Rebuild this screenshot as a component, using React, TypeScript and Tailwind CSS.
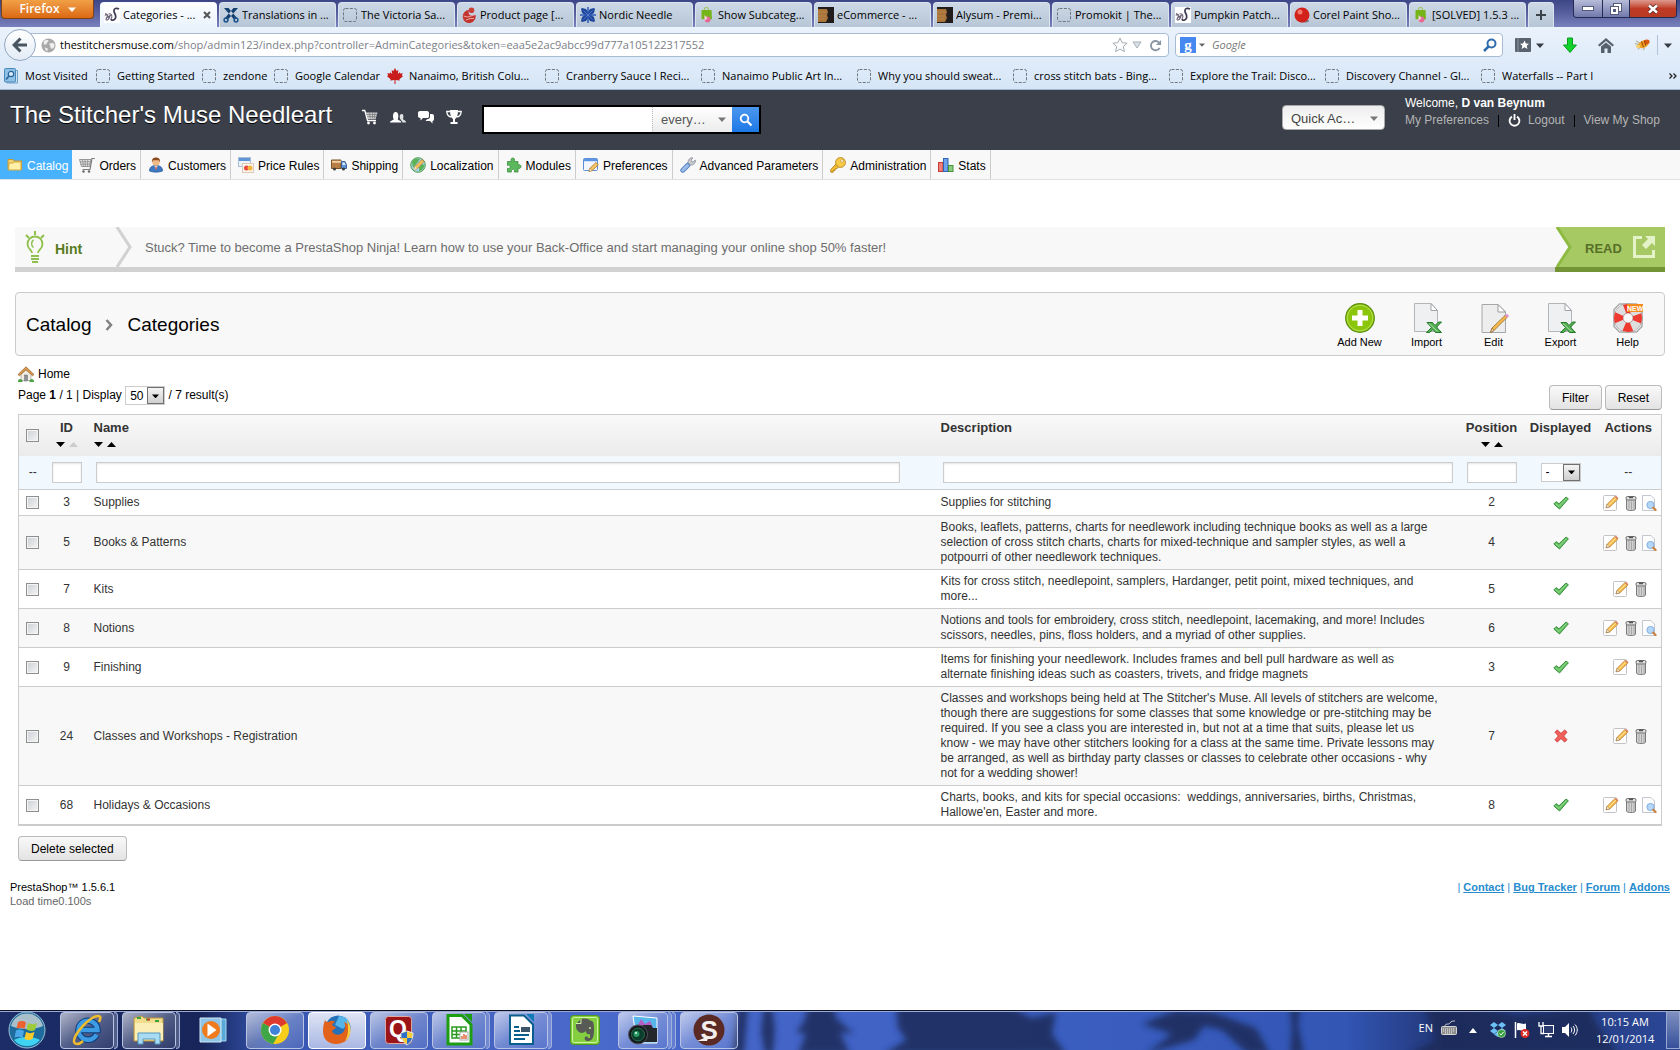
import React from "react";
import clsx from "clsx";

interface IconProps {
  className?: string;
}

type TabIconName = "muse" | "scissors" | "blank" | "presta" | "cross" | "bag" | "wood" | "red";

interface Category {
  id: number;
  name: string;
  description: string;
  position: number;
  displayed: boolean;
  viewable: boolean;
}

const tabs: { label: string; icon: TabIconName; active?: boolean }[] = [
  { label: "Categories - ...", icon: "muse", active: true },
  { label: "Translations in ...", icon: "scissors" },
  { label: "The Victoria Sa...", icon: "blank" },
  { label: "Product page [...", icon: "presta" },
  { label: "Nordic Needle", icon: "cross" },
  { label: "Show Subcateg...", icon: "bag" },
  { label: "eCommerce - ...", icon: "wood" },
  { label: "Alysum - Premi...", icon: "wood" },
  { label: "Promokit | The...", icon: "blank" },
  { label: "Pumpkin Patch...", icon: "muse" },
  { label: "Corel Paint Sho...", icon: "red" },
  { label: "[SOLVED] 1.5.3 ...", icon: "bag" },
];

const bookmarks = [
  { label: "Most Visited", icon: "visited", width: "w-[92px]" },
  { label: "Getting Started", icon: "blank", width: "w-[106px]" },
  { label: "zendone", icon: "blank", width: "w-[72px]" },
  { label: "Google Calendar", icon: "blank", width: "w-[114px]" },
  { label: "Nanaimo, British Colu...", icon: "maple", width: "w-[157px]" },
  { label: "Cranberry Sauce I Reci...", icon: "blank", width: "w-[156px]" },
  { label: "Nanaimo Public Art In...", icon: "blank", width: "w-[156px]" },
  { label: "Why you should sweat...", icon: "blank", width: "w-[156px]" },
  { label: "cross stitch bats - Bing...", icon: "blank", width: "w-[156px]" },
  { label: "Explore the Trail: Disco...", icon: "blank", width: "w-[156px]" },
  { label: "Discovery Channel - Gl...", icon: "blank", width: "w-[156px]" },
  { label: "Waterfalls -- Part I", icon: "blank", width: "w-[156px]" },
];

const categories: Category[] = [
  {
    id: 3,
    name: "Supplies",
    description: "Supplies for stitching",
    position: 2,
    displayed: true,
    viewable: true,
  },
  {
    id: 5,
    name: "Books & Patterns",
    description:
      "Books, leaflets, patterns, charts for needlework including technique books as well as a large selection of cross stitch charts, charts for mixed-technique and sampler styles, as well a potpourri of other needlework techniques.",
    position: 4,
    displayed: true,
    viewable: true,
  },
  {
    id: 7,
    name: "Kits",
    description:
      "Kits for cross stitch, needlepoint, samplers, Hardanger, petit point, mixed techniques, and more...",
    position: 5,
    displayed: true,
    viewable: false,
  },
  {
    id: 8,
    name: "Notions",
    description:
      "Notions and tools for embroidery, cross stitch, needlepoint, lacemaking, and more! Includes scissors, needles, pins, floss holders, and a myriad of other supplies.",
    position: 6,
    displayed: true,
    viewable: true,
  },
  {
    id: 9,
    name: "Finishing",
    description:
      "Items for finishing your needlework. Includes frames and bell pull hardware as well as alternate finishing ideas such as coasters, trivets, and fridge magnets",
    position: 3,
    displayed: true,
    viewable: false,
  },
  {
    id: 24,
    name: "Classes and Workshops - Registration",
    description:
      "Classes and workshops being held at The Stitcher's Muse. All levels of stitchers are welcome, though there are suggestions for some classes that some knowledge or pre-stitching may be required. If you see a class you are interested in, but not at a time that suits, please let us know - we may have other stitchers looking for a class at the same time. Private lessons may be arranged, as well as birthday party classes or classes to celebrate other occasions - why not for a wedding shower!",
    position: 7,
    displayed: false,
    viewable: false,
  },
  {
    id: 68,
    name: "Holidays & Occasions",
    description:
      "Charts, books, and kits for special occasions:\u00a0 weddings, anniversaries, births, Christmas, Hallowe'en, Easter and more.",
    position: 8,
    displayed: true,
    viewable: true,
  },
];

/* ---------- Browser icons ---------- */

const BlankIcon = () => (
  <svg viewBox="0 0 16 16" className="size-4 shrink-0">
    <rect x="1.5" y="1.5" width="13" height="13" rx="2" fill="none" stroke="#6f757c" strokeDasharray="3 1.4" />
  </svg>
);

const TabIcon = ({ name }: { name: TabIconName }) => {
  switch (name) {
    case "muse":
      return (
        <svg viewBox="0 0 16 16" className="size-4 shrink-0">
          <rect width="16" height="16" fill="#fff" />
          <path d="M15 2c-2.500-1.500-5.500-.5-5 2.500.3 2 2.500 3.500 1.500 6.500-.8 2.500-4 3-4.500 1" fill="none" stroke="#3d3a52" strokeWidth="1.700" />
          <path d="M.8 8.500c1.700-2 3.500-1 2.500 1s-2 3.500-.5 3.500 3-3 3.500-5M1.500 6l3.500 5.500M4.500 7c3-1 4.500 2 2.500 5M2 11l5-3" fill="none" stroke="#6e6478" strokeWidth="1.100" />
        </svg>
      );
    case "scissors":
      return (
        <svg viewBox="0 0 16 16" className="size-4 shrink-0">
          <path d="M1 1h4.500L14 11l-2.500 2zM15 1h-4.500L2 11l2.500 2z" fill="#14406f" />
          <circle cx="3" cy="13" r="1.900" fill="none" stroke="#1c548c" strokeWidth="1.500" />
          <circle cx="13" cy="13" r="1.900" fill="none" stroke="#1c548c" strokeWidth="1.500" />
        </svg>
      );
    case "presta":
      return (
        <svg viewBox="0 0 16 16" className="size-4 shrink-0">
          <path d="M8 3A6.500 6.500 0 1 0 14.500 8L9 8.500 7.500 6z" fill="#c4342f" />
          <circle cx="10.500" cy="3.200" r="2.800" fill="#c93f38" />
          <path d="M2.500 9l4 1 7-2M5 13l4-1.500h4" stroke="#e9a49c" fill="none" />
        </svg>
      );
    case "cross":
      return (
        <svg viewBox="0 0 16 16" className="size-4 shrink-0">
          <path d="M2 1l4 1 2 3 2-3 4-1 1 1-1 4-3 2 3 2 1 4-1 1-4-1-2-3-2 3-4 1-1-1 1-4 3-2-3-2-1-4z" fill="#1e479c" />
          <path d="M0 8h16M8 0v16" stroke="#2c59b6" strokeWidth="1.500" />
          <path d="M3.500 3.500l9 9M12.500 3.500l-9 9" stroke="#5f82cc" strokeWidth=".8" />
        </svg>
      );
    case "bag":
      return (
        <svg viewBox="0 0 16 16" className="size-4 shrink-0">
          <path d="M5.500 4V2a2 1.500 0 0 1 4 0v2" fill="none" stroke="#a4c56a" strokeWidth="1.200" />
          <path d="M2.500 3h10l.5 9-4 1-6.500-1z" fill="#76b51a" />
          <circle cx="8.500" cy="12.500" r="3" fill="#e56a97" />
          <path d="M5.500 8v6l3-3" fill="#f3d5dc" />
        </svg>
      );
    case "wood":
      return (
        <svg viewBox="0 0 16 16" className="size-4 shrink-0">
          <rect width="16" height="16" fill="#211d1c" />
          <path d="M0 2h9l1 3-1 3 1 3-2 4H0z" fill="#a8743a" />
          <path d="M0 5h8M0 9h8M0 12h7" stroke="#b88449" />
        </svg>
      );
    case "red":
      return (
        <svg viewBox="0 0 16 16" className="size-4 shrink-0">
          <ellipse cx="10" cy="14" rx="5" ry="1.500" fill="#77808c" />
          <circle cx="8" cy="8" r="7.500" fill="#d3211c" />
          <circle cx="6" cy="5" r="2.500" fill="#f37a6c" />
        </svg>
      );
    default:
      return <BlankIcon />;
  }
};

const BookmarkIcon = ({ name }: { name: string }) => {
  if (name === "visited") {
    return (
      <svg viewBox="0 0 16 16" className="size-4 shrink-0">
        <path d="M4 2.500h10.500v12.500H4z" fill="#cfe3f3" stroke="#6fa3c8" />
        <rect x="1.500" y=".5" width="11" height="13.500" rx="1" fill="#8fc1e6" stroke="#4a88b9" />
        <circle cx="8" cy="6" r="2.700" fill="#d8edfb" stroke="#2a6596" strokeWidth="1.200" />
        <path d="M6 8l-3 3.500" stroke="#2a6596" strokeWidth="1.500" />
      </svg>
    );
  }
  if (name === "maple") {
    return (
      <svg viewBox="0 0 16 16" className="size-4 shrink-0">
        <path d="M8 0l1.600 3 1.800-1-.6 4 2-1.800.4 1.300 2.500-.3-.8 2.300 1.100.8-3.600 2.900.4 1.400L8.500 12v4h-1v-4l-4.300.6.4-1.400L0 8.300l1.100-.8L.3 5.200l2.500.3.4-1.300 2 1.800-.6-4 1.800 1z" fill="#c81d1a" />
      </svg>
    );
  }
  return <BlankIcon />;
};

const Caret = ({ className }: IconProps) => (
  <svg viewBox="0 0 8 5" className={clsx("w-2 shrink-0", className)}>
    <path d="M0 .5h8L4 5z" fill="currentColor" />
  </svg>
);

/* ---------- Browser chrome ---------- */

const TabStrip = () => (
  <div className="flex h-[27px] items-start overflow-hidden bg-linear-to-b from-[#3d4686] via-[#59609f] to-[#7881bd]">
    <button className="ml-px flex h-[19px] w-[93px] shrink-0 items-center justify-center gap-2 rounded-b border border-t-0 border-[#7c4315] bg-linear-to-b from-[#f0a046] to-[#dc680f] text-[12px] font-semibold text-white">
      Firefox
      <Caret />
    </button>
    <div className="ml-[6px] flex items-end gap-[2px] pt-[2px]">
      {tabs.map((tab) => (
        <button
          key={tab.label}
          className={clsx(
            "flex h-[25px] w-[117px] items-center gap-[3px] overflow-hidden rounded-t-sm border border-b-0 pl-[3px] text-left whitespace-nowrap text-black",
            tab.active
              ? "border-[#f5faff] bg-linear-to-b from-[#fdfeff] to-[#e9f2fc]"
              : "border-[#dbe4ee] bg-linear-to-b from-[#ccd8e6] to-[#b7c6d6]"
          )}
        >
          <TabIcon name={tab.icon} />
          <span className="min-w-0 flex-1 overflow-hidden">{tab.label}</span>
          {tab.active && (
            <svg viewBox="0 0 8 8" className="mr-[5px] size-2 shrink-0">
              <path d="M1 1l6 6M7 1L1 7" stroke="#555" strokeWidth="2" />
            </svg>
          )}
        </button>
      ))}
      <button
        aria-label="New tab"
        className="flex h-[25px] w-[26px] items-center justify-center rounded-t-sm border border-b-0 border-[#dbe4ee] bg-linear-to-b from-[#ccd8e6] to-[#b7c6d6]"
      >
        <svg viewBox="0 0 10 10" className="size-[10px]">
          <path d="M5 0v10M0 5h10" stroke="#3c424a" strokeWidth="2" />
        </svg>
      </button>
    </div>
    <div className="mr-[3px] ml-auto flex h-[18px] shrink-0 overflow-hidden rounded-b border border-t-0 border-[#242a50]">
      <button aria-label="Minimize" className="flex w-[29px] items-center justify-center border-r border-[#242a50] bg-linear-to-b from-[#b7bcd9] to-[#7279ab]">
        <svg viewBox="0 0 12 5" className="w-3">
          <rect x=".5" y=".5" width="11" height="4" fill="#fff" stroke="#555b7e" />
        </svg>
      </button>
      <button aria-label="Restore" className="flex w-[27px] items-center justify-center border-r border-[#242a50] bg-linear-to-b from-[#b7bcd9] to-[#7279ab]">
        <svg viewBox="0 0 12 12" className="size-3">
          <rect x="3.500" y=".5" width="8" height="8" fill="#fff" stroke="#555b7e" />
          <rect x=".5" y="3.500" width="8" height="8" fill="#fff" stroke="#555b7e" />
          <rect x="3" y="6" width="3" height="3" fill="#555b7e" />
        </svg>
      </button>
      <button aria-label="Close" className="flex w-[46px] items-center justify-center bg-linear-to-b from-[#dc9a8f] via-[#c03a26] to-[#b83a20]">
        <svg viewBox="0 0 12 10" className="w-3">
          <path d="M2 1.500l8 7M10 1.500l-8 7" stroke="#5c2a2a" strokeWidth="4" />
          <path d="M2 1.500l8 7M10 1.500l-8 7" stroke="#fff" strokeWidth="2.500" />
        </svg>
      </button>
    </div>
  </div>
);

const NavBar = () => (
  <div className="flex h-9 items-center bg-linear-to-b from-[#eaf2fc] to-[#dfebf9] pr-2">
    <button
      aria-label="Back"
      className="z-10 ml-1 flex size-8 shrink-0 items-center justify-center rounded-full border border-[#93a8c2] bg-linear-to-b from-white to-[#e3ebf5]"
    >
      <svg viewBox="0 0 16 16" className="size-4">
        <path d="M8.500 1.500L2 8l6.500 6.500M2.500 8H15" fill="none" stroke="#4a5562" strokeWidth="3" />
      </svg>
    </button>
    <div className="-ml-2 flex h-6 flex-1 items-center rounded-r-sm border border-[#a7bcd4] bg-white pl-3">
      <svg viewBox="0 0 16 16" className="size-[15px] shrink-0">
        <circle cx="8" cy="8" r="7.500" fill="#a9a9a9" />
        <path d="M3 3c2-1 5-1 5 0s-2 2-2 3-1 1-3 1zM9 6c2-1 4-1 5 0s0 4-1 5-3 0-3-2-2-2-1-3zM4 10l3 1 0 3-2-1z" fill="#efefef" />
      </svg>
      <div className="ml-1 flex-1 text-[#7b8087]">
        <span className="text-black">thestitchersmuse.com</span>
        /shop/admin123/index.php?controller=AdminCategories&amp;token=eaa5e2ac9abcc99d777a105122317552
      </div>
      <svg viewBox="0 0 16 16" className="size-4">
        <path d="M8 1l2.100 4.700 5 .5-3.800 3.400 1.100 5L8 12l-4.400 2.600 1.100-5L.9 6.200l5-.5z" fill="#fdfdfd" stroke="#a5adb6" />
      </svg>
      <svg viewBox="0 0 10 8" className="ml-1 w-[10px]">
        <path d="M1 1h8L5 7z" fill="#dbe1e8" stroke="#a5adb6" />
      </svg>
      <svg viewBox="0 0 14 14" className="mr-[6px] ml-[7px] size-[13px]">
        <path d="M11.500 9.500A5 5 0 1 1 10.500 3.500" fill="none" stroke="#8795a5" strokeWidth="2" />
        <path d="M13 1v5.500H7.500z" fill="#8795a5" />
      </svg>
    </div>
    <div className="ml-[6px] flex h-6 w-[328px] items-center rounded-sm border border-[#a7bcd4] bg-white pr-[5px] pl-1">
      <span className="flex size-4 items-center justify-center bg-[#4687f0] font-['Liberation_Serif',serif] text-[15px] leading-[14px] font-bold text-white">
        g
      </span>
      <Caret className="ml-[3px] w-[6px] text-[#666]" />
      <input
        aria-label="Search Google"
        placeholder="Google"
        className="ml-[7px] min-w-0 flex-1 italic outline-none placeholder:text-[#777]"
      />
      <svg viewBox="0 0 14 14" className="size-[14px]">
        <circle cx="8.500" cy="5.500" r="4" fill="none" stroke="#2f6cab" strokeWidth="2" />
        <path d="M5.500 8.500L1 13" stroke="#2f6cab" strokeWidth="2.500" />
      </svg>
    </div>
    <button aria-label="Bookmarks" className="ml-3 flex items-center gap-[5px] text-[#333b45]">
      <svg viewBox="0 0 16 14" className="w-4">
        <rect width="16" height="14" rx="1" fill="#59636f" />
        <path d="M3 0v14" stroke="#8c96a3" />
        <path d="M9.500 2.500l1.400 3 3.100.3-2.300 2 .7 3.200-2.900-1.700L6.600 11l.7-3.200L5 5.800l3.100-.3z" fill="#fff" />
      </svg>
      <Caret />
    </button>
    <button aria-label="Downloads" className="ml-[18px]">
      <svg viewBox="0 0 16 16" className="size-4">
        <path d="M5.500 1h5v7h4L8 15.500 1.500 8h4z" fill="#12d22e" stroke="#0a9c1f" />
      </svg>
    </button>
    <button aria-label="Home page" className="ml-[20px]">
      <svg viewBox="0 0 16 16" className="size-4">
        <path d="M0 8l8-7 8 7-1.500 1.500L8 4 1.500 9.500z" fill="#56616e" />
        <path d="M3 9.500l5-4 5 4V16H9.500v-4.500h-3V16H3z" fill="#56616e" />
      </svg>
    </button>
    <button aria-label="Firebug" className="ml-[20px]">
      <svg viewBox="0 0 18 14" className="w-[17px]">
        <path d="M1 6l5 1M4 12l4-3M10 13l1-3M2 3l5 3" stroke="#9aa07d" />
        <ellipse cx="10" cy="6.500" rx="6" ry="3.800" transform="rotate(-25 10 6.500)" fill="#f0a021" />
        <ellipse cx="13.500" cy="4" rx="3" ry="2.500" fill="#d8590f" />
        <path d="M8 3.500l2 6M11 3l1.500 5" stroke="#8f3c0b" />
        <ellipse cx="4.500" cy="9" rx="2.500" ry="1.500" fill="#f7cf6a" />
      </svg>
    </button>
    <span className="mx-[6px] h-5 border-l border-[#b3c3d6]" />
    <Caret className="text-[#333b45]" />
  </div>
);

const BookmarksBar = () => (
  <div className="flex h-[27px] items-center border-b border-[#a4b9d1] bg-linear-to-b from-[#dfebf9] to-[#d6e6f6] pl-[3px] text-black">
    {bookmarks.map((item) => (
      <a key={item.label} href="#" className={clsx("flex items-center gap-[6px] whitespace-nowrap", item.width)}>
        <BookmarkIcon name={item.icon} />
        {item.label}
      </a>
    ))}
    <button aria-label="More bookmarks" className="mr-[3px] ml-auto">
      <svg viewBox="0 0 8 6" className="w-2">
        <path d="M.5.500L3 3 .5 5.500M4.500.500L7 3 4.500 5.500" fill="none" stroke="#222" strokeWidth="1.300" />
      </svg>
    </button>
  </div>
);

/* ---------- Shop icons ---------- */

const CartIcon = ({ className }: IconProps) => (
  <svg viewBox="0 0 16 16" className={clsx("size-4 shrink-0", className)}>
    <path d="M0 1.500h2.800L5.500 11.500H14" fill="none" stroke="currentColor" strokeWidth="1.300" />
    <path d="M3.500 3.500H15.500L13.500 10H5.500z" fill="currentColor" opacity=".75" />
    <path d="M4 5.500h11M5 7.700h9.500M7.500 3.500l.8 6M10.500 3.500v6M13 3.500l-.8 6" stroke="#6a6a6a" strokeWidth=".6" />
    <circle cx="6.500" cy="14" r="1.400" fill="currentColor" />
    <circle cx="12.500" cy="14" r="1.400" fill="currentColor" />
  </svg>
);

/* Cart used in the main menu, with its basket on the left */
const OrdersIcon = () => (
  <svg viewBox="0 0 16 16" className="size-4 shrink-0">
    <path d="M.5 2.500h11.500L10.500 9.500H2.500z" fill="#e3e3e3" stroke="#8d8d8d" strokeWidth=".9" />
    <path d="M1 4.800h10.500M1.800 7.200H11M3.500 2.500l1 7M6 2.500l.3 7M8.800 2.500l-.4 7" stroke="#8d8d8d" strokeWidth=".8" />
    <path d="M15.800 1.500H13L11 12.500H3.500" fill="none" stroke="#7b7b7b" strokeWidth="1.200" />
    <circle cx="4.500" cy="14.500" r="1.200" fill="#666" />
    <circle cx="10" cy="14.500" r="1.200" fill="#666" />
  </svg>
);

const FolderIcon = () => (
  <svg viewBox="0 0 16 16" className="size-4 shrink-0">
    <path d="M1 2.500h5l1 1.500h7.500V12.500H1z" fill="#f2d172" stroke="#c99a2c" />
    <path d="M2 6h4l1-1h7v8H1.500z" fill="#fff0a8" stroke="#d5a93a" />
  </svg>
);

const PersonIcon = () => (
  <svg viewBox="0 0 16 16" className="size-4 shrink-0">
    <path d="M1.500 14c0-4 2.500-5.500 6.500-5.500s6.500 1.500 6.500 5.500c-3 1.500-10 1.500-13 0z" fill="#3d78c3" stroke="#255391" strokeWidth=".7" />
    <path d="M6.500 9l1.500 4 1.500-4z" fill="#fff" />
    <path d="M7.500 9.500h1L8.700 12l-.7 1-.7-1z" fill="#c43a22" />
    <circle cx="8" cy="5" r="3.700" fill="#f0b987" />
    <path d="M4 5.500C3.300 1.500 6 .5 8 .5s4.700 1 4 5l-1-2.300H5z" fill="#8a4a1b" />
  </svg>
);

const PriceIcon = () => (
  <svg viewBox="0 0 16 16" className="size-4 shrink-0">
    <rect x=".5" y=".5" width="12" height="9" fill="#edf3fa" stroke="#a9bdd5" />
    <rect x="1" y="1" width="11" height="3" fill="#5d95d6" />
    <rect x="4.500" y="6.500" width="11" height="9" fill="#fbf6ee" stroke="#dccab6" />
    <circle cx="8.500" cy="11" r="2.500" fill="#e8463c" />
    <circle cx="12" cy="11" r="2.500" fill="#f5b43c" />
  </svg>
);

const TruckIcon = () => (
  <svg viewBox="0 0 16 16" className="size-4 shrink-0">
    <path d="M.5 3h9.500v8.500H.5z" fill="#b87f45" stroke="#7d5226" />
    <path d="M1 4.800h9" stroke="#f0cfa3" strokeWidth="2" />
    <path d="M10.500 4.500h3.500l1.500 3.500v3.500h-5z" fill="#5f94d6" stroke="#38609a" />
    <path d="M11.500 5.500h2l1 2.500h-3z" fill="#d9ecfb" />
    <circle cx="3.500" cy="12" r="1.500" fill="#3c3c3c" />
    <circle cx="12.500" cy="12" r="1.500" fill="#3c3c3c" />
  </svg>
);

const GlobeIcon = () => (
  <svg viewBox="0 0 16 16" className="size-4 shrink-0">
    <circle cx="8" cy="8" r="7.300" fill="#a5d5ea" stroke="#4f9c4a" />
    <path d="M2 5c2-4 6-4 8-3L7 6l-4 5zM9 14c3 0 5-3 5.500-6L12 7l-3 3z" fill="#5db255" />
    <path d="M4 13l1-3.500L12 2.500l2 2L7 11.800z" fill="#f5c25c" stroke="#b1742a" strokeWidth=".7" />
    <path d="M4 13l1-3.500L7 11.800z" fill="#fbe9c5" />
  </svg>
);

const PuzzleIcon = () => (
  <svg viewBox="0 0 16 16" className="size-4 shrink-0">
    <path d="M1.500 4.500h4C4.500 2.500 5.200 1 6.800 1s2.300 1.500 1.300 3.500H12v3.700c1.800-1 3-.2 3 1.300s-1.200 2.500-3 1.500V15H8.300c.8-1.800 0-2.700-1.300-2.700s-2.300.9-1.500 2.700h-4v-3.800c1.700.8 2.700 0 2.700-1.400s-1-2.100-2.700-1.300z" fill="#5cb85c" stroke="#3b8f3e" strokeWidth=".8" />
  </svg>
);

const PreferencesIcon = () => (
  <svg viewBox="0 0 16 16" className="size-4 shrink-0">
    <rect x=".5" y="1.500" width="14" height="12" rx="1" fill="#f3f7fd" stroke="#5c8fd3" />
    <path d="M1 3h13" stroke="#5c95e3" strokeWidth="2.500" />
    <path d="M6 14.500l1-3.300 6-5.700 2.300 2.300-6 5.700z" fill="#f6c463" stroke="#a9762b" strokeWidth=".8" />
    <path d="M6 14.500l1-3.300 2.300 2.300z" fill="#fdf0d4" stroke="#a9762b" strokeWidth=".5" />
  </svg>
);

const WrenchIcon = () => (
  <svg viewBox="0 0 16 16" className="size-4 shrink-0">
    <path d="M2.800 13.200l5-5" stroke="#5a86c4" strokeWidth="5" strokeLinecap="round" />
    <path d="M2.800 13.200l4.700-4.700" stroke="#9dbdea" strokeWidth="3" strokeLinecap="round" />
    <path d="M8 5.500C8 2 11 0 13 1l-2 2 .5 1.500 1.500.5 2.300-2C16 6 13 8.500 10.500 8z" fill="#c9cdd2" stroke="#868b92" strokeWidth=".8" />
  </svg>
);

const KeyIcon = () => (
  <svg viewBox="0 0 16 16" className="size-4 shrink-0">
    <path d="M6.500 6.500L.8 12.500v2.700h2.400V13.500h1.800v-1.700h1.800L9 9.500z" fill="#f2be32" stroke="#b3801a" strokeWidth=".9" />
    <circle cx="10.500" cy="5.500" r="4.900" fill="#f7cb46" stroke="#b9861e" strokeWidth=".9" />
    <circle cx="12" cy="4" r="1.400" fill="#fff" stroke="#b9861e" strokeWidth=".6" />
  </svg>
);

const StatsIcon = () => (
  <svg viewBox="0 0 16 16" className="size-4 shrink-0">
    <rect x=".5" y="5.500" width="4.500" height="9" fill="#f07f7a" stroke="#c83a35" />
    <rect x="5.500" y="1.500" width="4.500" height="13" fill="#6fa3ea" stroke="#2f64b5" />
    <rect x="10.500" y="8.500" width="4.500" height="6" fill="#8cce81" stroke="#46903b" />
  </svg>
);

const HouseIcon = () => (
  <svg viewBox="0 0 16 16" className="size-4 shrink-0">
    <path d="M3 8l5-5 5 5v6.500H3z" fill="#efece4" stroke="#9a958b" strokeWidth=".6" />
    <path d="M0 8.500L8 .8l8 7.700-1.500 1.200L8 3.900 1.500 9.700z" fill="#d99a4e" stroke="#93602a" strokeWidth=".7" />
    <rect x="6.500" y="9" width="3" height="6" fill="#8f9297" stroke="#66696e" strokeWidth=".5" />
    <path d="M0 15c0-2 3-3 4-1 1 .5 1 2 0 2H0zM16 15c0-2-3-3-4-1-1 .5-1 2 0 2h4z" fill="#4fa347" />
  </svg>
);

const EditSmallIcon = () => (
  <svg viewBox="0 0 16 16" className="size-4 shrink-0">
    <rect x=".5" y=".5" width="13" height="15" rx="1" fill="#fff" stroke="#c3c3c8" />
    <path d="M3 12.800l1.200-3.600 7.500-7.400 2.800 2.600-7.600 7.400z" fill="#f9c04f" stroke="#b77a2c" strokeWidth=".8" />
    <path d="M3 12.800l1.200-3.600 2.700 2.600z" fill="#f7e7cf" stroke="#8d6c46" strokeWidth=".5" />
    <path d="M5.500 10.300l7.300-7.200" stroke="#fde6a4" />
    <path d="M11.700 1.800l2.800 2.600 1-1.200L13 .8z" fill="#d9866a" />
  </svg>
);

const TrashIcon = () => (
  <svg viewBox="0 0 12 16" className="h-4 w-3 shrink-0">
    <path d="M1.500 4.500h9v9.500c0 2-9 2-9 0z" fill="#d2d2d2" stroke="#7a7a7a" />
    <path d="M4 6v8M6.500 6.300v8.200M9 6v8" stroke="#9a9a9a" strokeWidth=".8" />
    <rect x="1" y="1.500" width="10" height="3.500" rx="1.500" fill="#dedede" stroke="#6a6a6a" />
    <path d="M4 2.500h4" stroke="#555" strokeWidth="1.500" />
  </svg>
);

const ViewIcon = () => (
  <svg viewBox="0 0 16 16" className="size-4 shrink-0">
    <path d="M1.500.5H10l3.500 3.500v11.500h-12z" fill="#fdfdfe" stroke="#c4c7cd" />
    <circle cx="9.500" cy="10" r="3.600" fill="#b5d7f7" stroke="#80afe0" />
    <path d="M12.300 12.800l2.200 2.200" stroke="#c98240" strokeWidth="2.300" strokeLinecap="round" />
  </svg>
);

const CheckIcon = () => (
  <svg viewBox="0 0 16 16" className="size-4">
    <path d="M.8 9l2.400-2.400 2.800 2.200L13 2l2.400 1.800L6.500 14z" fill="#5fc05c" stroke="#33873a" strokeWidth=".9" />
    <path d="M2.500 8.700l3.500 2.800 7.500-8" fill="none" stroke="#9ddd97" strokeWidth=".9" />
  </svg>
);

const CrossIcon = () => (
  <svg viewBox="0 0 16 16" className="size-4">
    <path d="M2 4.300L4.300 2 8 5.500 11.700 2 14 4.300 10.600 8l3.400 3.700-2.300 2.300L8 10.500 4.300 14 2 11.700 5.400 8z" fill="#f2605c" stroke="#c92f2f" strokeWidth=".9" />
  </svg>
);

const menuItems = [
  { label: "Catalog", icon: <FolderIcon />, active: true },
  { label: "Orders", icon: <OrdersIcon /> },
  { label: "Customers", icon: <PersonIcon /> },
  { label: "Price Rules", icon: <PriceIcon /> },
  { label: "Shipping", icon: <TruckIcon /> },
  { label: "Localization", icon: <GlobeIcon /> },
  { label: "Modules", icon: <PuzzleIcon /> },
  { label: "Preferences", icon: <PreferencesIcon /> },
  { label: "Advanced Parameters", icon: <WrenchIcon /> },
  { label: "Administration", icon: <KeyIcon /> },
  { label: "Stats", icon: <StatsIcon /> },
];

/* ---------- Shop header ---------- */

const Header = () => (
  <header className="flex h-[60px] items-start bg-[#3a3f49] text-white">
    <h1 className="mt-[10px] ml-[10px] text-[24px] leading-[30px] [text-shadow:0_1px_0_#000]">
      The Stitcher's Muse Needleart
    </h1>
    <div className="mt-[19px] ml-[30px] flex gap-3">
      <button aria-label="New orders">
        <CartIcon />
      </button>
      <button aria-label="New customers">
        <svg viewBox="0 0 16 16" className="size-4">
          <path d="M0 13.500c0-2 3-2 3.700-3.300C2.500 8 2.700 3 5.700 3s3.200 5 2 7.200c.7 1.300 3.700 1.300 3.700 3.300z" fill="#fff" />
          <path d="M10 9.500C9.300 7 10 5 11.700 5s2.300 2.300 1.200 5c.6 1 3.100 1.200 3.100 3.500h-3.500c-.3-1.800-2-2.300-2.500-4z" fill="#dfe0e2" />
        </svg>
      </button>
      <button aria-label="New messages">
        <svg viewBox="0 0 16 16" className="size-4">
          <path d="M2 2h7c1.500 0 2 1 2 2v3c0 1.500-.7 2-2 2H5l-2.500 2.500V9C.7 9 0 8 0 7V4c0-1 .5-2 2-2z" fill="#fff" />
          <path d="M12 5h2c1.500 0 2 1 2 2v3c0 1.300-.7 2-1.500 2v2.500L12 12H7.500L9 10.200c2 0 3-1 3-2.700z" fill="#fff" />
        </svg>
      </button>
      <button aria-label="Milestones">
        <svg viewBox="0 0 16 16" className="size-4">
          <path d="M4 1h8c0 5-1 8-3 9v3h2.500v2h-7v-2H7v-3C5 9 4 6 4 1z" fill="#fff" />
          <path d="M4 2.500H.8C1 6 2.500 7.500 5 8M12 2.500h3.200C15 6 13.500 7.500 11 8" fill="none" stroke="#fff" strokeWidth="1.300" />
        </svg>
      </button>
    </div>
    <form className="mt-[15px] ml-[20px] flex h-[29px] w-[279px] border-2 border-black bg-white" onSubmit={(e) => e.preventDefault()}>
      <input aria-label="Search" className="min-w-0 flex-1 px-2 text-[13px] text-black outline-none" />
      <div className="relative w-20 border-l border-dotted border-[#bbb] bg-linear-to-b from-white to-[#ececec]">
        <select aria-label="Search scope" className="h-full w-full appearance-none pl-2 text-[13px] text-[#555] outline-none">
          <option>every…</option>
        </select>
        <Caret className="pointer-events-none absolute top-[10px] right-[6px] text-[#777]" />
      </div>
      <button aria-label="Go" className="flex w-[27px] items-center justify-center bg-linear-to-b from-[#4b97ee] to-[#1a78e6]">
        <svg viewBox="0 0 14 14" className="size-[14px]">
          <circle cx="5.500" cy="5.500" r="3.800" fill="none" stroke="#fff" strokeWidth="1.800" />
          <path d="M8.500 8.500l4 4" stroke="#fff" strokeWidth="2.200" />
        </svg>
      </button>
    </form>
    <div className="relative mt-[15px] ml-auto h-[25px] w-[103px] rounded border border-[#aaa] bg-linear-to-b from-[#eee] to-white">
      <select aria-label="Quick Access" className="h-full w-full appearance-none pl-2 text-[13px] text-[#444] outline-none">
        <option>Quick Ac…</option>
      </select>
      <Caret className="pointer-events-none absolute top-[10px] right-[6px] text-[#777]" />
    </div>
    <div className="mt-[5px] mr-[20px] ml-[20px] w-[255px] text-[12px] leading-[17px]">
      <p>
        Welcome, <strong>D van Beynum</strong>
      </p>
      <div className="flex items-center justify-between text-[#b4b4b4]">
        <a href="#">My Preferences</a>
        <span className="h-3 border-l border-black" />
        <a href="#" className="flex items-center gap-[7px]">
          <svg viewBox="0 0 14 14" className="size-[13px]">
            <path d="M4.300 2.800a5.300 5.300 0 1 0 5.400 0" fill="none" stroke="#fff" strokeWidth="2" />
            <path d="M7 0v6.500" stroke="#fff" strokeWidth="2" />
          </svg>
          Logout
        </a>
        <span className="h-3 border-l border-black" />
        <a href="#">View My Shop</a>
      </div>
    </div>
  </header>
);

const MainMenu = () => (
  <nav className="flex h-[30px] border-b border-[#e0e0e0] bg-[#f8f8f8] text-[12px] text-black">
    {menuItems.map((item) => (
      <a
        key={item.label}
        href="#"
        className={clsx(
          "flex items-center gap-1 pr-[4px] pl-[7px] whitespace-nowrap",
          item.active ? "bg-[#49b2ff] text-white" : "border-r border-[#ccc]"
        )}
      >
        {item.icon}
        <span className="pt-[2px]">{item.label}</span>
      </a>
    ))}
  </nav>
);

/* ---------- Page body ---------- */

const HintBar = () => (
  <div className="mt-[47px] flex h-[45px]">
    <div className="flex flex-1 items-stretch border-b-[5px] border-[#d1d1d1] bg-[#f8f8f8]">
      <div className="flex w-[101px] items-center gap-[10px] pl-[10px]">
        <svg viewBox="0 0 20 32" className="h-8 w-5" fill="none" stroke="#8fc04b">
          <path d="M10 0v4M1 4l3 3M19 4l-3 3" strokeWidth="2" />
          <path d="M7 22c0-3-4.500-4-4.500-9a7.500 7.500 0 0 1 15 0c0 5-4.500 6-4.500 9" strokeWidth="1.800" />
          <path d="M6 25h8M6 28h8M7 31h6" strokeWidth="2" />
          <path d="M8.500 9c-2.500 1.500-2.500 6 0 7.500" strokeWidth="1.500" />
        </svg>
        <span className="pt-1 text-[14px] font-bold text-[#587c1e]">Hint</span>
      </div>
      <svg viewBox="0 0 16 40" className="h-10 w-4">
        <path d="M1 0l13 20L1 40" fill="none" stroke="#d1d1d1" strokeWidth="3" />
      </svg>
      <p className="ml-[13px] self-center pt-px text-[13px] text-[#6d6d6d]">
        Stuck? Time to become a PrestaShop Ninja! Learn how to use your Back-Office and start managing your online shop 50% faster!
      </p>
    </div>
    <a href="#" className="flex w-[110px] items-center border-b-[5px] border-[#739334] bg-[#a6c964] text-[13px] font-bold text-[#576f27]">
      <svg viewBox="0 0 18 40" className="h-10 w-[18px]">
        <path d="M0 0h2l13 20L2 40H0z" fill="#f8f8f8" />
        <path d="M2 0l13 20L2 40" fill="none" stroke="#8dbb42" strokeWidth="3" />
      </svg>
      <span className="ml-[12px] flex-1 pt-1">READ</span>
      <svg viewBox="0 0 22 22" className="mr-[10px] size-[22px]">
        <path d="M9 1.500H1.500v19h19V14" fill="none" stroke="#e4f2c8" strokeWidth="3" />
        <path d="M12 0h10v10l-3-3-6 6-4-4 6-6z" fill="#e4f2c8" />
      </svg>
    </a>
  </div>
);

const SheetIcon = () => (
  <svg viewBox="0 0 30 30" className="size-[30px]">
    <path d="M2.500.5H19l6.500 7v21h-23z" fill="#eef0f1" stroke="#b3b6b9" />
    <path d="M19 .5v7h6.500z" fill="#fff" stroke="#a0a4a8" />
    <path d="M15 19.500h5.500l2.500 3 3.500-3.500h3l-5 5.200 5 5.300h-6l-2.500-3-3.500 3h-3l5-5z" fill="#54b053" stroke="#23792b" />
    <path d="M17 20.500l8.500 8" stroke="#c5eabf" strokeWidth=".8" />
  </svg>
);

const toolbar = [
  {
    label: "Add New",
    icon: (
      <svg viewBox="0 0 30 30" className="size-[30px]">
        <circle cx="15" cy="15" r="14.300" fill="#8cc60c" stroke="#5a8f12" strokeWidth="1.200" />
        <circle cx="15" cy="15" r="12.800" fill="none" stroke="#b9e04f" />
        <path d="M12.500 7h5v5.500H23v5h-5.500V23h-5v-5.500H7v-5h5.500z" fill="#fff" />
      </svg>
    ),
  },
  { label: "Import", icon: <SheetIcon /> },
  {
    label: "Edit",
    icon: (
      <svg viewBox="0 0 30 30" className="size-[30px]">
        <path d="M3 1.500h16l7.500 7.500v20.500H3z" fill="#ededed" stroke="#a5a8ab" />
        <path d="M19 1.500V9h7.500z" fill="#fff" stroke="#999" />
        <path d="M11.500 29.500l1.500-4.500L26 12.500l2 2L15 27.500z" fill="#f5b94a" stroke="#96662a" strokeWidth=".8" />
        <path d="M11.500 29.500l1.500-4.500 2 2.500z" fill="#e9d3b2" stroke="#96662a" strokeWidth=".6" />
        <path d="M26 12.500l1-1c2-.7 3.300.8 2.500 2.300L28 14.500z" fill="#e892cf" />
      </svg>
    ),
  },
  { label: "Export", icon: <SheetIcon /> },
  {
    label: "Help",
    icon: (
      <svg viewBox="0 0 30 30" className="size-[30px]">
        <path d="M6.500 1h17L29 6.500v17L23.500 29h-17L1 23.500v-17z" fill="none" stroke="#a9a9a9" strokeWidth="1.500" />
        <circle cx="15" cy="15" r="9.500" fill="none" stroke="#9a9a9a" strokeWidth="10" />
        <circle cx="15" cy="15" r="9.500" fill="none" stroke="#dedede" strokeWidth="9" />
        <circle cx="15" cy="15" r="9.500" fill="none" stroke="#ef3a2f" strokeWidth="9" strokeDasharray="7.460 7.460" strokeDashoffset="3.730" />
        <circle cx="15" cy="15" r="5" fill="#f8f8f8" stroke="#9e4a44" strokeWidth=".5" />
        <rect x="14" y="1" width="16" height="8" fill="#f58a1f" />
        <text x="14" y="7.500" fontSize="7" fontWeight="bold" fontFamily="Liberation Sans" fill="#fff">
          NEW
        </text>
      </svg>
    ),
  },
];

const PageTitle = () => (
  <div className="mt-5 flex h-16 items-center rounded border border-[#ccc] bg-[#f8f8f8] pt-[2px] pl-[10px] text-[19px] text-black">
    <span>Catalog</span>
    <svg viewBox="0 0 8 12" className="mr-[15px] ml-[13px] h-3 w-2">
      <path d="M1.500 1L6 6l-4.500 5" fill="none" stroke="#808080" strokeWidth="2.500" />
    </svg>
    <h2>Categories</h2>
    <div className="mr-[3px] ml-auto flex pt-[2px]">
      {toolbar.map((item) => (
        <a key={item.label} href="#" className="flex w-[67px] flex-col items-center text-[11px] leading-[15px]">
          {item.icon}
          <span className="mt-[2px]">{item.label}</span>
        </a>
      ))}
    </div>
  </div>
);

interface BoxSelectProps {
  label: string;
  value: string;
}

const BoxSelect: React.FC<BoxSelectProps> = ({ label, value }) => (
  <span className="relative inline-block h-[19px] w-10 border border-[#ccc] bg-white align-middle">
    <select aria-label={label} className="block h-full w-full appearance-none pl-1 text-[12px] leading-[16px] text-black outline-none">
      <option>{value}</option>
    </select>
    <span className="pointer-events-none absolute inset-y-0 right-0 flex w-[17px] items-center justify-center border border-[#707070] bg-linear-to-b from-[#f4f4f4] to-[#cfcfcf]">
      <Caret className="w-[7px] text-black" />
    </span>
  </span>
);

const buttonClass =
  "h-[25px] rounded-sm border border-[#bbb] border-b-[#999] bg-linear-to-b from-[#f9f9f9] to-[#e3e3e3] px-3 text-[12px] text-black";

const checkboxClass =
  "block mx-auto size-[13px] appearance-none border border-[#8e8f8f] bg-linear-to-br from-[#cbcfd5] to-[#f6f6f6] shadow-[inset_0_0_0_1px_#f4f4f4]";

const inputClass =
  "block h-[21px] border border-[#ccc] bg-white px-1 text-[12px] shadow-[inset_0_1px_2px_#e4e4e4] outline-none";

const SortArrows = ({ ascDisabled = false }: { ascDisabled?: boolean }) => (
  <span className="mt-[7px] flex gap-1">
    <button aria-label="Sort descending">
      <svg viewBox="0 0 9 5" className="w-[9px]">
        <path d="M0 0h9L4.500 5z" fill="#000" />
      </svg>
    </button>
    <button aria-label="Sort ascending">
      <svg viewBox="0 0 9 5" className="w-[9px]">
        <path d="M0 5h9L4.500 0z" fill={ascDisabled ? "#ccc" : "#000"} />
      </svg>
    </button>
  </span>
);

const CategoryTable = () => (
  <table className="w-full table-fixed border-collapse border border-b-2 border-[#ccc] text-[12px] leading-[15px] text-[#333]">
    <colgroup>
      <col className="w-7" />
      <col className="w-10" />
      <col />
      <col className="w-[524px]" />
      <col className="w-[68px]" />
      <col className="w-[70px]" />
      <col className="w-[66px]" />
    </colgroup>
    <thead>
      <tr className="h-[41px] bg-linear-to-b from-[#f9f9f9] to-[#ebebeb] text-[13px]">
        <th>
          <input type="checkbox" aria-label="Select all" className={checkboxClass} />
        </th>
        <th className="pt-[5px] align-top">
          ID
          <span className="flex justify-center">
            <SortArrows ascDisabled />
          </span>
        </th>
        <th className="pt-[5px] pl-[7px] text-left align-top">
          Name
          <SortArrows />
        </th>
        <th className="pt-[5px] pl-[7px] text-left align-top">Description</th>
        <th className="pt-[5px] align-top">
          Position
          <span className="flex justify-center">
            <SortArrows />
          </span>
        </th>
        <th className="pt-[5px] align-top">Displayed</th>
        <th className="pt-[5px] align-top">Actions</th>
      </tr>
      <tr className="h-[34px] border-b border-[#ccc] bg-[#f1f8fe]">
        <td className="text-center">--</td>
        <td>
          <input aria-label="Filter by ID" className={clsx(inputClass, "mx-auto w-[30px]")} />
        </td>
        <td className="pl-[9px]">
          <input aria-label="Filter by name" className={clsx(inputClass, "w-[96%]")} />
        </td>
        <td className="pr-[5px] pl-[9px]">
          <input aria-label="Filter by description" className={clsx(inputClass, "w-full")} />
        </td>
        <td>
          <input aria-label="Filter by position" className={clsx(inputClass, "mx-auto w-[50px]")} />
        </td>
        <td className="text-center">
          <BoxSelect label="Filter by displayed" value="-" />
        </td>
        <td className="text-center">--</td>
      </tr>
    </thead>
    <tbody>
      {categories.map((category, index) => (
        <tr key={category.id} className={clsx("border-b border-[#ccc]", index % 2 === 1 && "bg-[#f8f8f8]")}>
          <td className="py-1">
            <input type="checkbox" aria-label={`Select ${category.name}`} className={checkboxClass} />
          </td>
          <td className="py-1 text-center">{category.id}</td>
          <td className="py-1 pl-[7px]">{category.name}</td>
          <td className="py-1 pr-[17px] pl-[7px]">{category.description}</td>
          <td className="py-1 text-center">{category.position}</td>
          <td className="py-1">
            <button aria-label={category.displayed ? "Enabled" : "Disabled"} className="mx-auto block">
              {category.displayed ? <CheckIcon /> : <CrossIcon />}
            </button>
          </td>
          <td className="py-1">
            <div className="flex h-[17px] items-center justify-center gap-1 pl-[3px]">
              <button aria-label="Edit">
                <EditSmallIcon />
              </button>
              <button aria-label="Delete" className="pl-[2px]">
                <TrashIcon />
              </button>
              {category.viewable && (
                <button aria-label="View">
                  <ViewIcon />
                </button>
              )}
            </div>
          </td>
        </tr>
      ))}
    </tbody>
  </table>
);

const Content = () => (
  <main className="px-[15px] text-black">
    <HintBar />
    <PageTitle />
    <div className="px-[3px]">
      <a href="#" className="mt-[10px] flex items-center gap-1 text-[12px] leading-[16px]">
        <HouseIcon />
        Home
      </a>
      <div className="mt-[3px] mb-1 flex h-[25px] items-start justify-between text-[12px]">
        <div className="pt-px leading-[19px]">
          Page <b>1</b> / 1 | Display <BoxSelect label="Results per page" value="50" /> / 7 result(s)
        </div>
        <div className="flex gap-[3px]">
          <button className={buttonClass}>Filter</button>
          <button className={buttonClass}>Reset</button>
        </div>
      </div>
      <CategoryTable />
      <button className={clsx(buttonClass, "mt-[10px]")}>Delete selected</button>
    </div>
  </main>
);

const Footer = () => (
  <footer className="mt-[19px] flex justify-between px-[10px] text-[11px] leading-[14px]">
    <div>
      <a href="#" className="block text-black">
        PrestaShop™ 1.5.6.1
      </a>
      <span className="text-[#666]">Load time0.100s</span>
    </div>
    <div className="text-[#268ccd]">
      {["Contact", "Bug Tracker", "Forum", "Addons"].map((label) => (
        <React.Fragment key={label}>
          {" | "}
          <a href="#" className="font-bold underline">
            {label}
          </a>
        </React.Fragment>
      ))}
    </div>
  </footer>
);

/* ---------- Taskbar ---------- */

interface TaskItem {
  label: string;
  stacked?: number;
  state: "open" | "active" | "idle";
  icon: React.ReactNode;
}

const taskItems: TaskItem[] = [
  {
    label: "Internet Explorer",
    stacked: 1,
    state: "open",
    icon: (
      <svg viewBox="0 0 32 32" className="size-8">
        <path d="M25.500 20.500A9.500 9.500 0 1 1 26.500 16H9" fill="none" stroke="#0d3c79" strokeWidth="6.500" />
        <path d="M25.500 20.500A9.500 9.500 0 1 1 26.500 16H9" fill="none" stroke="#3c9be2" strokeWidth="4.500" />
        <path d="M28 8c2-4 2-6-1-6C21 2 9 13 4 23c-2 5-1 7 2 7 2 0 4-1 6-3" fill="none" stroke="#f0bb2c" strokeWidth="2.500" />
      </svg>
    ),
  },
  {
    label: "Windows Explorer",
    stacked: 1,
    state: "open",
    icon: (
      <svg viewBox="0 0 32 32" className="size-8">
        <path d="M1 4l8-2 2 2h19v23H1z" fill="#f3dd8d" stroke="#b8963c" />
        <path d="M2 9h28v17H2z" fill="#fbeeb6" />
        <path d="M4 4h4M13 5.500h4M22 7h4" stroke="#3aa53e" strokeWidth="2" />
        <path d="M14 5.500h3" stroke="#d33d2b" strokeWidth="2" />
        <path d="M5 30V19h22v11h-5v-5H10v5z" fill="#a9dbf2" stroke="#5697bd" />
      </svg>
    ),
  },
  {
    label: "Media Player",
    state: "idle",
    icon: (
      <svg viewBox="0 0 32 32" className="size-8">
        <path d="M8 5h21v22H8z" fill="#5aa8d8" stroke="#a5d6f0" />
        <path d="M3 4h21v24H3z" fill="#8fc5e6" stroke="#d1ebf8" />
        <circle cx="14" cy="16" r="9" fill="#f07b1c" />
        <path d="M10.500 9.500v13l9-6.500z" fill="#fff" />
      </svg>
    ),
  },
  {
    label: "Chrome",
    state: "open",
    icon: (
      <svg viewBox="0 0 32 32" className="size-8">
        <circle cx="16" cy="16" r="14" fill="#f7cd1c" />
        <path d="M16 16L3.900 9A14 14 0 0 1 28.100 9z" fill="#de3a2d" />
        <path d="M16 16L3.900 9A14 14 0 0 0 14 29.900L20 20z" fill="#3fa648" />
        <circle cx="16" cy="16" r="6.500" fill="#fff" />
        <circle cx="16" cy="16" r="5" fill="#3f83d9" />
      </svg>
    ),
  },
  {
    label: "Firefox",
    state: "active",
    icon: (
      <svg viewBox="0 0 32 32" className="size-8">
        <circle cx="17" cy="14" r="12.500" fill="#2471b9" />
        <path d="M18 2c6 0 9 4 10 6l-6 7-8-4z" fill="#55b4e8" />
        <path d="M4 6c1 2 2 2 4 2 3-2 5-1 6 0-3 1-3 3-2 4l3 1c-1 3-4 3-4 4 2 5 9 5 12 0 2-3 1-7 0-9 5 2 6 6 6 10 0 7-6 12-14 12S2 25 2 17c0-5 1-8 2-11z" fill="#e2621c" />
        <path d="M26 6c5 6 5 16-2 21 3-5 4-11 2-21z" fill="#f8cf3c" />
      </svg>
    ),
  },
  {
    label: "QuickBooks",
    state: "open",
    icon: (
      <svg viewBox="0 0 32 32" className="size-8">
        <rect x="2.500" y="2.500" width="26" height="27" rx="3" fill="#9b1418" stroke="#e0a6a0" />
        <text x="6" y="23" fontSize="23" fontWeight="bold" fontFamily="Liberation Sans" fill="#fff">
          Q
        </text>
        <path d="M24 17l6 2c0 6-2 9-6 12-4-3-6-6-6-12z" fill="#f6cd38" stroke="#dde6f0" />
        <path d="M24 17.500V24h-5.500l-.2-4.500zM24 24h5c-.7 3-2.500 5-5 6.500z" fill="#2d6fc9" />
      </svg>
    ),
  },
  {
    label: "Calc",
    stacked: 1,
    state: "open",
    icon: (
      <svg viewBox="0 0 32 32" className="size-8">
        <path d="M5 1.500h14l9 9V30H5z" fill="#fff" stroke="#1d9d12" strokeWidth="3" />
        <path d="M21 0h8v8z" fill="#1d9d12" />
        <path d="M9 13h14v11H9zM9 17h14M9 20.500h14M13.500 13v11M18 13v11" fill="none" stroke="#2a9a1f" strokeWidth="1.500" />
        <rect x="17" y="18" width="8" height="8" fill="#fff" stroke="#aaa" />
        <path d="M19 25v-3M21 25v-5M23 25v-4" stroke="#e0562a" strokeWidth="1.300" />
      </svg>
    ),
  },
  {
    label: "Writer",
    stacked: 1,
    state: "open",
    icon: (
      <svg viewBox="0 0 32 32" className="size-8">
        <path d="M5 1.500h14l9 9V30H5z" fill="#fff" stroke="#0a5e8e" strokeWidth="2" />
        <path d="M21 0h8v8z" fill="#0f7ab5" />
        <path d="M9 13h5M9 17h6M9 21h15M9 25h11" stroke="#0a5e8e" strokeWidth="2" />
        <rect x="16" y="13" width="9" height="5" fill="#3b566a" />
      </svg>
    ),
  },
  {
    label: "Evernote",
    state: "idle",
    icon: (
      <svg viewBox="0 0 32 32" className="size-8">
        <rect x="1.500" y="1.500" width="29" height="29" rx="3" fill="#83cf3f" stroke="#4d9b20" />
        <rect x="3.500" y="3.500" width="25" height="25" rx="2" fill="none" stroke="#d3f3a8" />
        <path d="M7 10l5-5c4-1 8 0 9 1.500 4 0 4 4 4 10 0 7-2 10.500-6 10.500-3 0-4-2-3-4 2-1 3 0 3 1h2v-4c-3 1-4-1-4-3-3 3-7 2-8 0-2-1-2-4-2-7z" fill="#575a55" />
        <path d="M7 9.500h5V5" fill="none" stroke="#d3f3a8" />
        <circle cx="21" cy="14" r="1" fill="#c8efa0" />
      </svg>
    ),
  },
  {
    label: "Camera",
    stacked: 2,
    state: "open",
    icon: (
      <svg viewBox="0 0 32 32" className="size-8">
        <path d="M6 2l24 2v25H10z" fill="#58b7ea" stroke="#fff" />
        <path d="M11 11l3-6 4 5 5-3 3 6H10z" fill="#b45fc4" />
        <path d="M7 15h6l3-4h8l2 3h4v14H7z" fill="#23262b" />
        <circle cx="11" cy="20.500" r="9.500" fill="#15181b" stroke="#4c5358" />
        <circle cx="11" cy="20.500" r="6.500" fill="#0c3c2b" stroke="#2b6d50" />
        <circle cx="9.500" cy="20" r="3" fill="#2a9a62" />
        <circle cx="9" cy="19" r="1" fill="#dff" />
      </svg>
    ),
  },
  {
    label: "S",
    state: "open",
    icon: (
      <svg viewBox="0 0 32 32" className="size-8">
        <circle cx="16" cy="16" r="15.500" fill="#5c2a24" />
        <path d="M4 27l12-5-2 5z" fill="#f4efec" />
        <text x="7.500" y="25" fontSize="26" fontWeight="bold" fontFamily="Liberation Sans" fill="#f4efec">
          S
        </text>
      </svg>
    ),
  },
];

const TaskButton: React.FC<{ item: TaskItem }> = ({ item }) => (
  <div className="flex h-[37px] w-[58px]">
    <button
      aria-label={item.label}
      className={clsx(
        "flex h-full min-w-0 flex-1 items-center justify-center rounded-sm",
        item.state === "open" && "border border-[#b9c4e4] bg-linear-to-br from-white/65 via-white/25 to-white/10",
        item.state === "active" && "border border-white bg-linear-to-b from-[#dfe4f3] to-[#a9b7e4]"
      )}
    >
      {item.icon}
    </button>
    {item.stacked && <span className="w-1 rounded-r-sm border border-l-0 border-[#9fb0dc] bg-white/25" />}
    {item.stacked === 2 && <span className="w-1 rounded-r-sm border border-l-0 border-[#9fb0dc] bg-white/15" />}
  </div>
);

const Wallpaper = () => (
  <svg viewBox="0 0 1680 40" preserveAspectRatio="none" className="absolute inset-0 h-full w-full">
    <defs>
      <linearGradient id="sky">
        <stop offset="0" stopColor="#1c2d68" />
        <stop offset=".12" stopColor="#17255a" />
        <stop offset=".16" stopColor="#3656b0" />
        <stop offset=".35" stopColor="#4a69cb" />
        <stop offset=".6" stopColor="#3c60c3" />
        <stop offset=".8" stopColor="#3356b5" />
        <stop offset=".86" stopColor="#213675" />
        <stop offset="1" stopColor="#2b4796" />
      </linearGradient>
      <filter id="soft" x="-5%" y="-50%" width="110%" height="200%">
        <feGaussianBlur stdDeviation="3" />
      </filter>
    </defs>
    <rect width="1680" height="40" fill="url(#sky)" />
    <g fill="#1d2b58" opacity=".85" filter="url(#soft)">
      <path d="M738-4h10l-4 48h-12zM764-4h8l3 24-2 24h-8l-4-22zM808-4h26l2 12 18 16-14-2 6 14 4 8h-52l8-20-10-2 8-10z" />
      <path d="M896-4h114l22 12 24-6-4 22 14 20H884l22-14-8-12z" />
      <path d="M1142 14l34-14 36 2 44 16 14 26h-22l-26-24-18-4-10 14-48 14 26-20zM1290-4h10l-2 20 6 28h-14l2-24z" />
      <path d="M1424-4h50l44 10 70-10 10 20 20 28h-210l28-14z" />
    </g>
    <path d="M0 .5h1680" stroke="#0b1020" />
    <path d="M0 1.500h1680" stroke="#9dabd6" />
  </svg>
);

const Taskbar = () => (
  <div className="relative mt-auto h-10 overflow-hidden text-white">
    <Wallpaper />
    <div className="relative flex h-full items-center">
      <button aria-label="Start" className="ml-2 shrink-0">
        <svg viewBox="0 0 38 38" className="size-[38px]">
          <circle cx="19" cy="19" r="18" fill="#1d6c9d" stroke="#9cc3d8" />
          <path d="M3 15a16.500 16.500 0 0 1 32 0c-8 4-24 4-32 0z" fill="#a9bfca" />
          <path d="M6 29a17 17 0 0 0 26 0c-6-4-20-4-26 0z" fill="#3fd3f2" />
          <path d="M10 11c3-1.500 6-1 8 .5L16.500 18c-2.500-1.500-5-1.500-8-.5z" fill="#ee6130" />
          <path d="M20 12c3 1.500 6 1.500 9 0l-2 7c-3 1.500-6 1-8.500-.5z" fill="#9ccc3a" />
          <path d="M8 19.500c3-1.500 5.500-1 8 .5L14.500 27c-2.500-1.500-5-1.500-8-.5z" fill="#4ba8e8" />
          <path d="M18 21c3 1.500 5.500 1.500 8.500 0l-2 7c-3 1.500-5.500 1-8 0z" fill="#fbc928" />
        </svg>
      </button>
      <div className="ml-[14px] flex gap-1">
        {taskItems.map((item) => (
          <TaskButton key={item.label} item={item} />
        ))}
      </div>
      <div className="ml-auto flex items-center text-[11px]">
        <span className="mb-1">EN</span>
        <svg viewBox="0 0 16 16" className="mb-1 ml-2 size-4">
          <path d="M4 6c0-3 4-1 5-3s3-2 5-2" fill="none" stroke="#ccc" />
          <rect x=".5" y="6.500" width="15" height="8" rx="1" fill="#8d8d8d" stroke="#d5d5d5" />
          <path d="M2 9h12M2 11h12M4 13h8" stroke="#eee" strokeDasharray="1 1" />
        </svg>
        <svg viewBox="0 0 8 5" className="ml-3 w-2">
          <path d="M0 5h8L4 0z" fill="#fff" />
        </svg>
        <svg viewBox="0 0 16 16" className="ml-[13px] size-4">
          <path d="M4 0l4 3-4 3-4-3zM12 0l4 3-4 3-4-3zM4 6l4 3-4 3-4-3zM12 6l4 3-4 3-4-3zM8 9.500l4 3L8 15l-4-2.500z" fill="#6cc0f5" />
          <circle cx="11.500" cy="11.500" r="4" fill="#35a03c" stroke="#fff" strokeWidth=".5" />
          <path d="M9.500 11.500l1.500 1.500 2.500-3" fill="none" stroke="#fff" />
        </svg>
        <svg viewBox="0 0 16 16" className="ml-2 size-4">
          <path d="M1.500 0v16" stroke="#fff" strokeWidth="1.500" />
          <path d="M3 1.500c3-1.500 5 1.500 9 0v7c-4 1.500-6-1.500-9 0z" fill="#fff" />
          <circle cx="11" cy="11.500" r="4.500" fill="#dc2a26" />
          <path d="M9 9.500l4 4M13 9.500l-4 4" stroke="#fff" strokeWidth="1.500" />
        </svg>
        <svg viewBox="0 0 16 16" className="ml-2 size-4" fill="none" stroke="#fff">
          <rect x="5.500" y="3.500" width="10" height="8" fill="#2c3c6e" />
          <path d="M10.500 12v2M7 14.500h7" strokeWidth="1.500" />
          <path d="M1 0v4h4V0M3 4v7.500h3" strokeWidth="1.300" />
        </svg>
        <svg viewBox="0 0 16 16" className="ml-2 size-4">
          <path d="M0 5h3l4-4v14l-4-4H0z" fill="#fff" />
          <path d="M9 5.500c1 1.500 1 3.500 0 5M11 4c2 2.500 2 5.500 0 8M13 2.500c3 3.500 3 7.500 0 11" fill="none" stroke="#fff" />
        </svg>
        <time className="ml-[18px] w-[58px] text-center leading-[17px]">
          10:15 AM
          <br />
          12/01/2014
        </time>
        <button aria-label="Show desktop" className="ml-3 h-[38px] w-[14px] border border-[#9aa9d0] bg-linear-to-b from-white/40 to-white/5" />
      </div>
    </div>
  </div>
);

const App = () => (
  <div className="flex min-h-screen flex-col bg-white font-['Liberation_Sans',Arial,sans-serif]">
    <div className="font-['Open_Sans','Noto_Sans',sans-serif] text-[11px]">
      <TabStrip />
      <NavBar />
      <BookmarksBar />
    </div>
    <Header />
    <MainMenu />
    <Content />
    <Footer />
    <div className="mt-auto font-['Open_Sans','Noto_Sans',sans-serif]">
      <Taskbar />
    </div>
  </div>
);

export default App;
